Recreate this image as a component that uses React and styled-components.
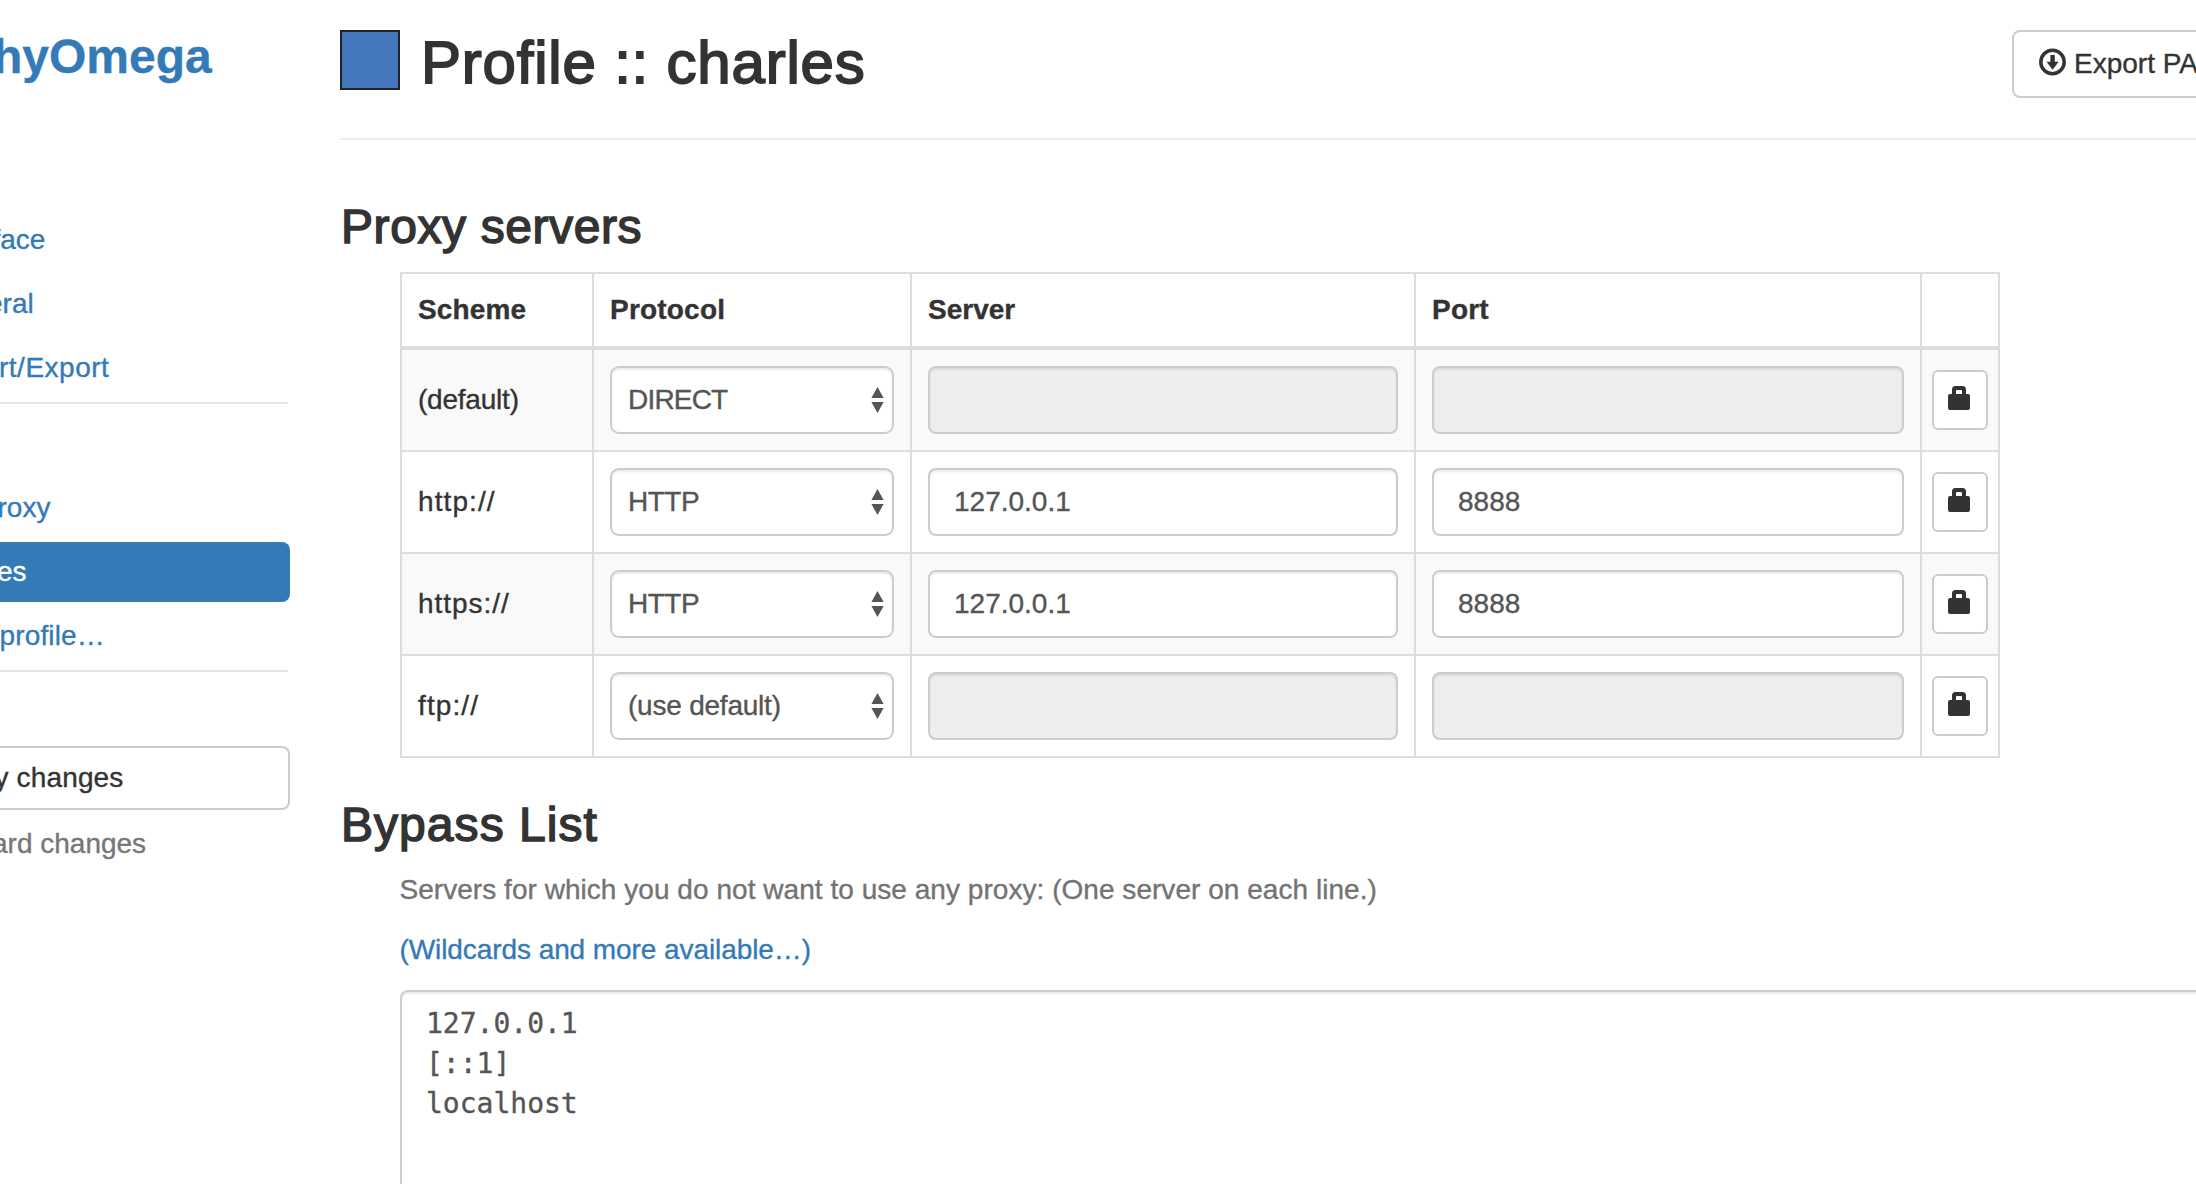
import React from "react";
import styled, { createGlobalStyle } from "styled-components";

const GlobalStyle = createGlobalStyle`
  * { box-sizing: border-box; }
  html, body { margin: 0; padding: 0; overflow: hidden; }
  body {
    background: #fff;
    color: #333;
    font: 28px/40px "Liberation Sans", Arial, sans-serif;
    -webkit-text-stroke: 0.35px currentColor;
  }
`;

const Page = styled.div`
  display: flex;
  gap: 50px;
  width: 2196px;
  height: 1184px;
  overflow: hidden;
`;

const Sidebar = styled.aside`
  flex: none;
  display: flex;
  flex-direction: column;
  width: 290px;
  padding-top: 27px;
  overflow: hidden;
`;

const Label = styled.span`
  display: block;
  white-space: nowrap;
  margin-left: ${(p) => p.$shift || 0}px;
  letter-spacing: ${(p) => p.$track || 0}px;
`;

const Brand = styled.h1`
  margin: 0 0 123px;
  font-size: 48px;
  line-height: 60px;
  font-weight: 700;
  color: #337ab7;
`;

const Nav = styled.nav`
  display: flex;
  flex-direction: column;
  gap: 4px;
`;

const NavItem = styled.a`
  height: 60px;
  padding: 10px 0;
  border-radius: 0 8px 8px 0;
  color: ${(p) => (p.$active ? "#fff" : "#337ab7")};
  background: ${(p) => (p.$active ? "#337ab7" : "transparent")};
`;

const Divider = styled.div`
  height: 2px;
  width: 288px;
  margin: 4px 0 74px;
  background: #e5e5e5;
`;

const ApplyButton = styled.button`
  height: 64px;
  padding: 0;
  border: 2px solid #ccc;
  border-left: 0;
  border-radius: 0 8px 8px 0;
  background: #fff;
  color: #333;
  font: inherit;
  text-align: left;
`;

const Discard = styled.a`
  margin-top: 14px;
  color: #777;
`;

const Main = styled.main`
  flex: none;
  width: 1900px;
  padding-top: 30px;
`;

const Header = styled.header`
  display: flex;
  height: 110px;
  border-bottom: 2px solid #eee;
`;

const Swatch = styled.div`
  flex: none;
  width: 60px;
  height: 60px;
  border: 2px solid #222;
  background: #4477bb;
`;

const Title = styled.h2`
  flex: none;
  width: 1591px;
  margin: 0 0 0 21px;
  font-size: 60px;
  line-height: 66px;
  font-weight: 400;
  letter-spacing: 0.8px;
  -webkit-text-stroke: 1.8px #333;
`;

const ExportButton = styled.button`
  flex: none;
  display: flex;
  align-items: center;
  gap: 8px;
  width: 240px;
  height: 68px;
  padding: 0 25px;
  border: 2px solid #ccc;
  border-radius: 8px;
  background: #fff;
  color: #333;
  font: inherit;
  white-space: nowrap;

  svg { flex: none; margin-bottom: 4px; }
`;

const Heading = styled.h3`
  margin: ${(p) => p.$top}px 0 19px 1px;
  font-size: 48px;
  line-height: 52px;
  font-weight: 400;
  letter-spacing: ${(p) => p.$track}px;
  -webkit-text-stroke: 1.5px #333;
`;

const Block = styled.div`
  margin-left: 60px;
`;

const Table = styled.div`
  width: 1600px;
  border: 2px solid #ddd;
`;

const Row = styled.div`
  display: grid;
  grid-template-columns: 192px 318px 504px 506px 76px;
  height: 102px;
  border-bottom: 2px solid #ddd;
  background: ${(p) => (p.$striped ? "#f9f9f9" : "#fff")};

  &:last-child { height: 100px; border-bottom: 0; }
`;

const HeadRow = styled(Row)`
  height: 76px;
  border-bottom-width: 4px;
  font-weight: 700;
`;

const Cell = styled.div`
  display: flex;
  align-items: center;
  min-width: 0;
  padding: 0 16px;
  border-right: 2px solid #ddd;

  &:last-child { justify-content: center; padding: 0; border-right: 0; }
`;

const Select = styled.div`
  display: flex;
  align-items: center;
  justify-content: space-between;
  width: 100%;
  height: 68px;
  padding: 0 8px 0 16px;
  border: 2px solid #ccc;
  border-radius: 9px;
  background: #fff;
  color: #555;
  box-shadow: inset 0 2px 2px rgba(0, 0, 0, 0.075);
`;

const Input = styled.input`
  width: 100%;
  height: 68px;
  padding: 0 24px;
  border: 2px solid #ccc;
  border-radius: 8px;
  background: ${(p) => (p.disabled ? "#eee" : "#fff")};
  color: #555;
  font: inherit;
  box-shadow: inset 0 2px 2px rgba(0, 0, 0, 0.075);
`;

const LockButton = styled.button`
  display: flex;
  align-items: flex-start;
  justify-content: center;
  width: 56px;
  height: 60px;
  padding: 14px 2px 0 0;
  border: 2px solid #ccc;
  border-radius: 6px;
  background: #fff;
`;

const Help = styled.p`
  margin: 0 0 20px;
  color: #737373;
`;

const Link = styled.a`
  color: #337ab7;
`;

const Textarea = styled.textarea`
  display: block;
  width: 1840px;
  height: 400px;
  padding: 12px 24px;
  border: 2px solid #ccc;
  border-radius: 8px;
  background: #fff;
  color: #555;
  font: 28px/40px "DejaVu Sans Mono", monospace;
  resize: none;
  outline: none;
  box-shadow: inset 0 2px 2px rgba(0, 0, 0, 0.075);
`;

const DownloadIcon = () => (
  <svg width="27" height="28" viewBox="0 0 27 28">
    <circle cx="13.5" cy="14" r="11.7" fill="none" stroke="#333" strokeWidth="3.5" />
    <path d="M11.4 7h4.4v6.8h3.9L13.6 21.8 7.5 13.8h3.9z" fill="#333" />
  </svg>
);

const LockIcon = () => (
  <svg width="22" height="24" viewBox="0 0 22 24" fill="#333">
    <path
      fillRule="evenodd"
      d="M4 8V3.5Q4 0 7.5 0h7Q18 0 18 3.5V8h2q2 0 2 2v12q0 2-2 2H2q-2 0-2-2V10q0-2 2-2zM8 8h6V5q0-1-1-1H9Q8 4 8 5z"
    />
  </svg>
);

const Arrows = () => (
  <svg width="13" height="26" viewBox="0 0 13 26" fill="#555">
    <path d="M6.5 0L12.6 11H.4zM.4 15h12.2L6.5 26z" />
  </svg>
);

const columns = [
  ["Scheme", 0.15],
  ["Protocol", 0.2],
  ["Server", 0],
  ["Port", 0.2],
];

const rows = [
  { scheme: "(default)", track: -0.22, protocol: "DIRECT", pTrack: -0.8 },
  { scheme: "http://", track: 1.1, protocol: "HTTP", pTrack: -0.5, server: "127.0.0.1", port: "8888" },
  { scheme: "https://", track: 0.95, protocol: "HTTP", pTrack: -0.5, server: "127.0.0.1", port: "8888" },
  { scheme: "ftp://", track: 1.1, protocol: "(use default)", pTrack: -0.22 },
];

export default function App() {
  return (
    <>
      <GlobalStyle />
      <Page>
        <Sidebar>
          <Brand><Label $shift={-7} $track={0}>hyOmega</Label></Brand>
          <Nav>
            <NavItem><Label $shift={-7.5}>face</Label></NavItem>
            <NavItem><Label $shift={-13}>eral</Label></NavItem>
            <NavItem><Label $shift={-1} $track={0.5}>rt/Export</Label></NavItem>
          </Nav>
          <Divider />
          <Nav>
            <NavItem><Label $shift={-2.5}>roxy</Label></NavItem>
            <NavItem $active><Label $shift={-3}>es</Label></NavItem>
            <NavItem><Label $shift={-0.5} $track={0.15}>profile…</Label></NavItem>
          </Nav>
          <Divider />
          <ApplyButton><Label $shift={-5.5} $track={0.15}>y changes</Label></ApplyButton>
          <Discard><Label $shift={-8} $track={0}>ard changes</Label></Discard>
        </Sidebar>
        <Main>
          <Header>
            <Swatch />
            <Title>Profile :: charles</Title>
            <ExportButton>
              <DownloadIcon />
              <Label>Export PA</Label>
            </ExportButton>
          </Header>
          <Heading $top={61} $track={0.6}>Proxy servers</Heading>
          <Block>
            <Table>
              <HeadRow>
                {columns.map(([name, track]) => (
                  <Cell key={name}><Label $track={track}>{name}</Label></Cell>
                ))}
                <Cell />
              </HeadRow>
              {rows.map((r, i) => (
                <Row key={r.scheme} $striped={i % 2 === 0}>
                  <Cell><Label $track={r.track}>{r.scheme}</Label></Cell>
                  <Cell>
                    <Select><Label $track={r.pTrack}>{r.protocol}</Label><Arrows /></Select>
                  </Cell>
                  <Cell><Input readOnly disabled={!r.server} value={r.server || ""} /></Cell>
                  <Cell><Input readOnly disabled={!r.port} value={r.port || ""} /></Cell>
                  <Cell><LockButton><LockIcon /></LockButton></Cell>
                </Row>
              ))}
            </Table>
          </Block>
          <Heading $top={41} $track={1.05}>Bypass List</Heading>
          <Block>
            <Help><Label $shift={-0.5} $track={0.04}>Servers for which you do not want to use any proxy: (One server on each line.)</Label></Help>
            <Help><Link><Label $shift={-0.5} $track={-0.08}>(Wildcards and more available…)</Label></Link></Help>
            <Textarea readOnly value={"127.0.0.1\n[::1]\nlocalhost"} />
          </Block>
        </Main>
      </Page>
    </>
  );
}
